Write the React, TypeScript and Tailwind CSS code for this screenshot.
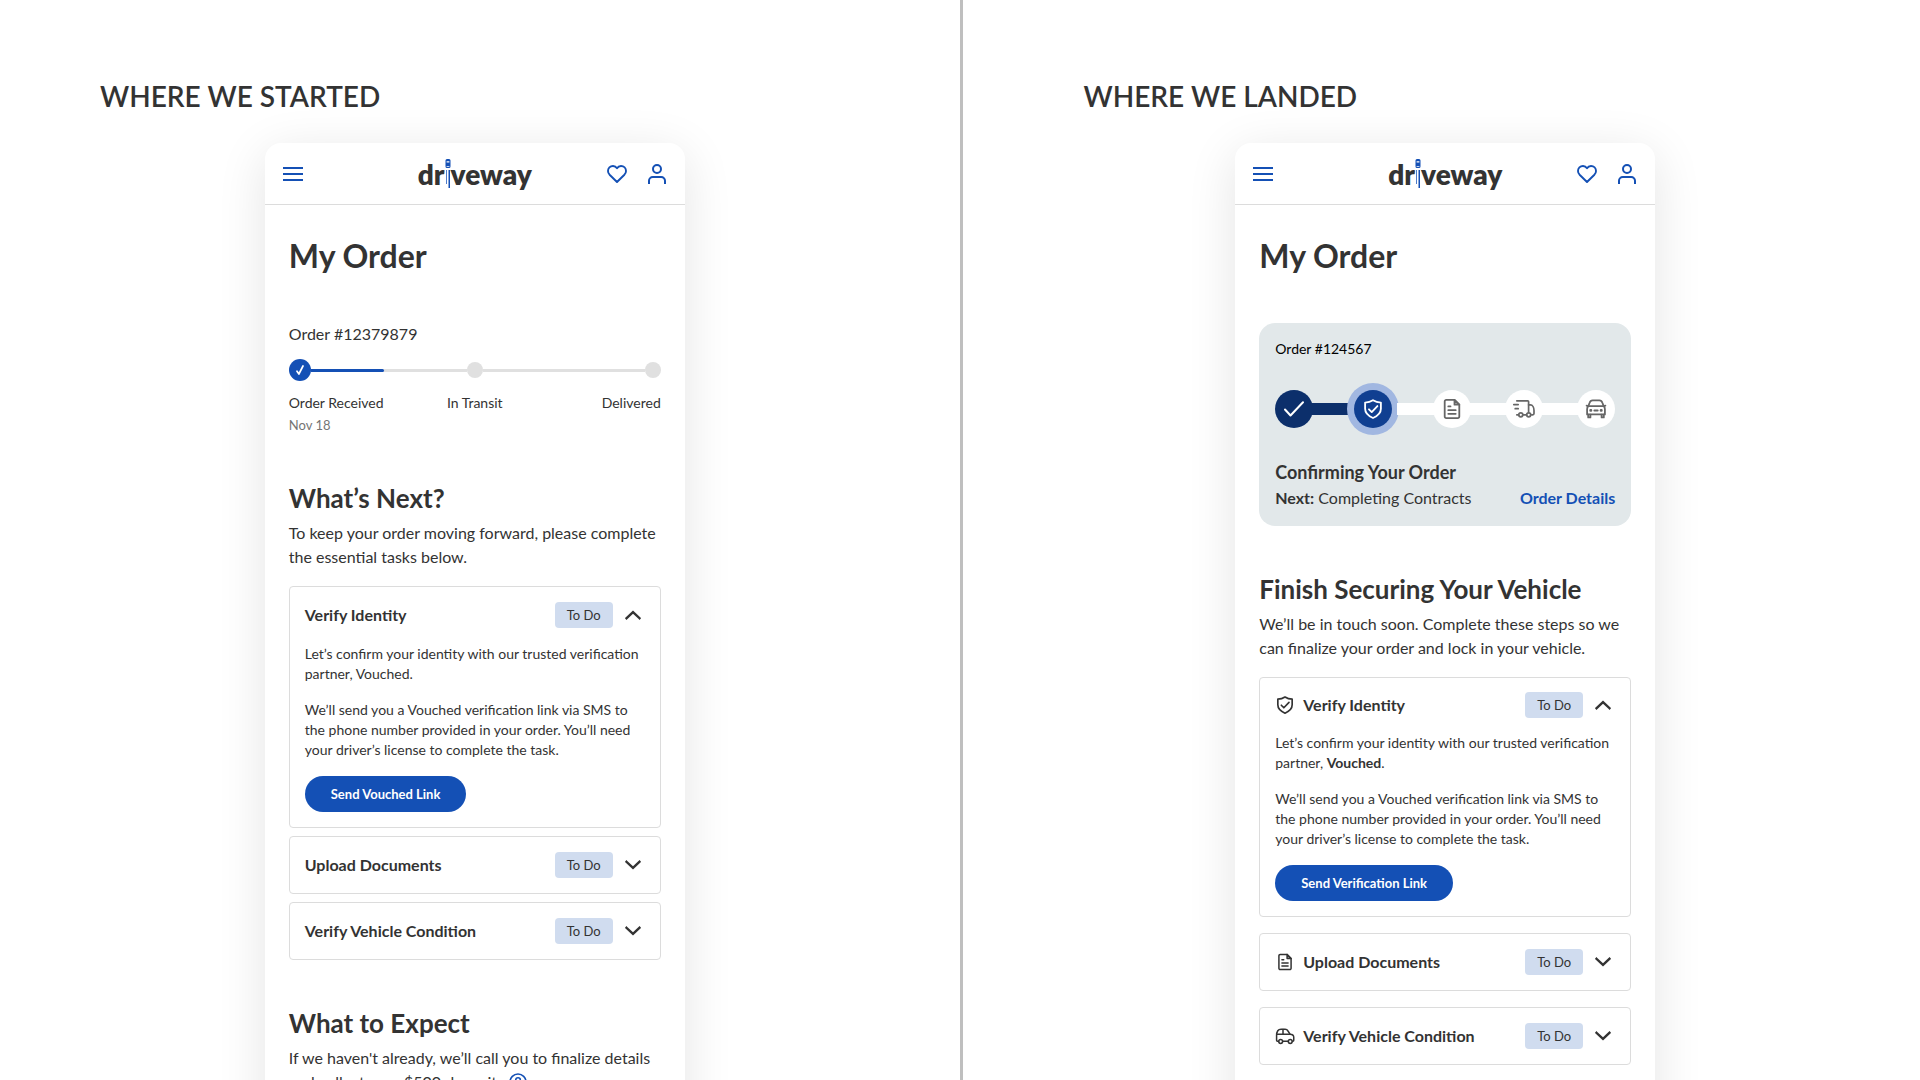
import * as React from "react";
import { clsx } from "clsx";

type IconProps = { className?: string };

function ShieldIcon({ className }: IconProps) {
  return (
    <svg viewBox="0 0 24 24" fill="none" stroke="currentColor" strokeWidth="2" strokeLinejoin="round" className={className} aria-hidden="true">
      <path d="M12 2.400c2.600 1.700 5.400 2.500 8.600 2.600v6.800c0 4.600-3.600 7.900-8.600 10-5-2.100-8.600-5.400-8.600-10V5C6.600 4.900 9.400 4.100 12 2.400Z" />
      <path d="m7.600 12.300 3 3L16.800 8.800" strokeLinecap="round" />
    </svg>
  );
}

function DocIcon({ className }: IconProps) {
  return (
    <svg viewBox="0 0 24 24" fill="none" stroke="currentColor" strokeWidth="1.8" strokeLinecap="round" strokeLinejoin="round" className={className} aria-hidden="true">
      <path d="M14.500 2.900H6.200A1.500 1.500 0 0 0 4.700 4.400v15.200a1.500 1.500 0 0 0 1.500 1.500h11.600a1.500 1.500 0 0 0 1.500-1.500V7.700Z" />
      <path d="M14.500 2.900v4.800h4.800Z" fill="currentColor" fillOpacity=".35" />
      <path d="M8.300 9.400h2.200M8.300 13.200h7.400M8.300 16.800h7.400" />
    </svg>
  );
}

function TruckIcon({ className }: IconProps) {
  return (
    <svg viewBox="0 0 24 24" fill="none" stroke="currentColor" strokeWidth="1.700" strokeLinecap="round" strokeLinejoin="round" className={className} aria-hidden="true">
      <path d="M4.800 3.800H15.700a.9.900 0 0 1 .9.900v10.800" />
      <path d="M16.600 7.800h1.800c2.200 0 3.600 2.900 3.600 5.700v3a1.300 1.300 0 0 1-1.300 1.300h-1" />
      <path d="M1.800 7.600h4.400M3.200 11.700h3M11 17.800h3.500M4.800 17.800h1.600" />
      <circle cx="8.800" cy="17.800" r="2" />
      <circle cx="16.700" cy="17.800" r="2" />
    </svg>
  );
}

function CarFrontIcon({ className }: IconProps) {
  return (
    <svg viewBox="0 0 24 24" fill="none" stroke="currentColor" strokeWidth="1.800" strokeLinecap="round" strokeLinejoin="round" className={className} aria-hidden="true">
      <path d="m4.300 9.200 1.300-3.500C6.200 3.900 7.200 3.400 8.600 3.400h6.800c1.400 0 2.400.5 3 2.300l1.300 3.500" />
      <path d="M2.600 8.600 4.300 9.200h15.400l1.700-.6" />
      <path d="M4.300 9.200c-.9.800-1.200 1.800-1.200 3v5.200h17.800v-5.200c0-1.200-.3-2.200-1.200-3" />
      <path d="M4.200 17.600v2.800h2.200v-2.800M17.600 17.600v2.800h2.200v-2.800" />
      <path d="M6.600 13.400h.4M17 13.400h.4" strokeWidth="2.600" />
      <path d="M10.400 13.400h3.200" strokeWidth="2" />
    </svg>
  );
}

function CarSideIcon({ className }: IconProps) {
  return (
    <svg viewBox="0 0 24 24" fill="none" stroke="currentColor" strokeWidth="1.800" strokeLinecap="round" strokeLinejoin="round" className={className} aria-hidden="true">
      <path d="M4.300 18.200H2.900a1 1 0 0 1-1-1v-5.500C1.900 6.800 3.600 4 7.200 4h5c1.700 0 2.600.7 3.400 2l2.600 4c2.800.2 4.300 1.300 4.300 3.600v3.600a1 1 0 0 1-1 1h-.4M9.400 18.200h6.300" />
      <path d="M2.200 10h16M9.600 4.200V10" />
      <circle cx="6.800" cy="18.600" r="2.300" />
      <circle cx="18.300" cy="18.600" r="2.300" />
    </svg>
  );
}

function Chevron({ open }: { open: boolean }) {
  return (
    <svg viewBox="0 0 16 10" fill="none" stroke="currentColor" strokeWidth="2.400" strokeLinecap="square" className={clsx("h-2.5 w-4", open && "rotate-180")} aria-hidden="true">
      <path d="m1.500 1.800 6.500 6 6.500-6" />
    </svg>
  );
}

function Logo() {
  return (
    <a href="#" aria-label="driveway" className="flex items-center text-[28px] leading-8 font-extrabold text-[#333]">
      <span>dr</span>
      <svg viewBox="0 0 6 30" className="h-[30px] w-1.5 text-[#1450b5]" fill="currentColor" aria-hidden="true">
        <path fillRule="evenodd" d="M2 0h2a1.500 1.500 0 0 1 1.500 1.500v6A1.500 1.500 0 0 1 4 9H2A1.500 1.500 0 0 1 .500 7.500v-6A1.500 1.500 0 0 1 2 0ZM1.600 2.200v1.400h2.800V2.200ZM1.600 7v.8h2.800V7Z" />
        <rect x="1" y="11" width="1" height="14" opacity=".75" />
        <rect x="3.500" y="11" width="1.500" height="18" />
      </svg>
      <span>veway</span>
    </a>
  );
}

function PhoneHeader() {
  return (
    <header className="flex h-[62px] items-center justify-between border-b border-[#dcdcdc] px-[18px] text-[#1450b5]">
      <button type="button" aria-label="Menu" className="flex w-[60px]">
        <svg viewBox="0 0 20 14" className="h-3.5 w-5" fill="currentColor" aria-hidden="true">
          <path d="M0 0h20v2H0zM0 6h20v2H0zM0 12h20v2H0z" />
        </svg>
      </button>
      <Logo />
      <div className="flex items-center gap-5">
        <button type="button" aria-label="Favorites">
          <svg viewBox="0 0 20 18" className="h-[18px] w-5" fill="none" stroke="currentColor" strokeWidth="1.900" strokeLinejoin="round" aria-hidden="true">
            <path d="M10 3.300C11 1.700 12.500 1 14 1c2.900 0 5 2.200 5 4.900 0 1.500-.6 2.700-1.600 3.800L10 17 2.600 9.700C1.600 8.600 1 7.400 1 5.900 1 3.200 3.100 1 6 1c1.500 0 3 .7 4 2.300Z" />
          </svg>
        </button>
        <button type="button" aria-label="Account">
          <svg viewBox="0 0 20 20" className="size-5" fill="none" stroke="currentColor" strokeWidth="2" aria-hidden="true">
            <circle cx="10" cy="5" r="4" />
            <path d="M2 20v-3.200A3.800 3.800 0 0 1 5.800 13h8.400a3.800 3.800 0 0 1 3.800 3.800V20" />
          </svg>
        </button>
      </div>
    </header>
  );
}

type TaskCardProps = {
  title: string;
  icon?: React.ReactNode;
  defaultOpen?: boolean;
  children?: React.ReactNode;
};

function TaskCard({ title, icon, defaultOpen = false, children }: TaskCardProps) {
  const [open, setOpen] = React.useState(defaultOpen);
  const compact = open && Boolean(icon);

  return (
    <section className="rounded border border-[#dcdcdc] p-[15px]">
      <h3>
        <button
          type="button"
          aria-expanded={open}
          onClick={() => setOpen(!open)}
          className={clsx("flex w-full items-center gap-3 pr-1", compact ? "h-6" : "h-[26px]")}
        >
          <span className="flex flex-1 items-center gap-2 text-left text-base font-bold">
            {icon}
            {title}
          </span>
          <span className="rounded bg-[#d0dcef] px-3 text-[13px] leading-[26px]">To Do</span>
          <Chevron open={open} />
        </button>
      </h3>
      {open && children}
    </section>
  );
}

function VerifyBody({ partner, action }: { partner: React.ReactNode; action: string }) {
  return (
    <div className="mt-4 flex flex-col items-start gap-4 text-sm leading-5">
      <p>
        Let’s confirm your identity with our trusted verification
        <br />
        partner, {partner}.
      </p>
      <p>
        We’ll send you a Vouched verification link via SMS to
        <br />
        the phone number provided in your order. You’ll need
        <br />
        your driver’s license to complete the task.
      </p>
      <button type="button" className="h-9 rounded-full bg-[#1450b5] px-[26px] text-[13px] font-bold text-white">
        {action}
      </button>
    </div>
  );
}

function SimpleTracker() {
  return (
    <div>
      <p className="text-base leading-[22px]">Order #12379879</p>
      <div className="mt-3.5 flex h-[22px] items-center">
        <span className="flex size-[22px] items-center justify-center rounded-full bg-[#1450b5]">
          <svg viewBox="0 0 8 10" className="h-2.5 w-2" fill="none" stroke="#fff" strokeWidth="1.700" strokeLinecap="round" strokeLinejoin="round" aria-hidden="true">
            <path d="M1 6.200 2.900 9 7 1" />
          </svg>
        </span>
        <span className="flex h-[3px] flex-[26] bg-[#e0e0e0]">
          <span className="w-[47%] rounded-r-full bg-[#1450b5]" />
        </span>
        <span className="size-4 rounded-full bg-[#e0e0e0]" />
        <span className="h-[3px] flex-[27] bg-[#e0e0e0]" />
        <span className="size-4 rounded-full bg-[#e0e0e0]" />
      </div>
      <div className="mt-3 grid grid-cols-3 text-sm leading-5">
        <span>Order Received</span>
        <span className="text-center">In Transit</span>
        <span className="text-right">Delivered</span>
      </div>
      <p className="mt-0.5 text-[13px] leading-5 text-[#757575]">Nov 18</p>
    </div>
  );
}

function Step({ children, className }: { children: React.ReactNode; className?: string }) {
  return (
    <span className={clsx("flex size-[38px] shrink-0 items-center justify-center rounded-full", className)}>
      {children}
    </span>
  );
}

function OrderTracker() {
  return (
    <div className="rounded-2xl bg-[#e2e8ea] p-4">
      <p className="text-sm leading-5 text-black">Order #124567</p>
      <div className="mt-6 flex items-center text-[#666]">
        <Step className="bg-[#0c2f6b] text-white">
          <svg viewBox="0 0 20 16" className="h-4 w-5" fill="none" stroke="currentColor" strokeWidth="2" strokeLinecap="round" strokeLinejoin="round" aria-hidden="true">
            <path d="m1 8.500 5.500 6L19 1.200" />
          </svg>
        </Step>
        <span className="-mx-0.5 h-3 flex-1 bg-[#0c2f6b]" />
        <span className="rounded-full bg-[#a1b7e1] p-[7px]">
          <Step className="bg-[#103f91] text-white">
            <ShieldIcon className="size-[22px]" />
          </Step>
        </span>
        <span className="-mx-0.5 h-3 flex-1 bg-white" />
        <Step className="bg-white">
          <DocIcon className="size-6" />
        </Step>
        <span className="-mx-0.5 h-3 flex-1 bg-white" />
        <Step className="bg-white">
          <TruckIcon className="size-6" />
        </Step>
        <span className="-mx-0.5 h-3 flex-1 bg-white" />
        <Step className="bg-white">
          <CarFrontIcon className="size-6" />
        </Step>
      </div>
      <h2 className="mt-6 text-lg leading-[27px] font-bold">Confirming Your Order</h2>
      <div className="flex items-center justify-between text-base leading-6">
        <p>
          <strong className="font-bold">Next:</strong> Completing Contracts
        </p>
        <a href="#" className="font-bold text-[#1450b5]">
          Order Details
        </a>
      </div>
    </div>
  );
}

function SectionIntro({ title, children }: { title: string; children: React.ReactNode }) {
  return (
    <div className="mt-[47px] flex flex-col gap-[7px]">
      <h2 className="text-[26px] leading-8 font-bold">{title}</h2>
      <p className="text-base leading-6">{children}</p>
    </div>
  );
}

function Phone({ children }: { children: React.ReactNode }) {
  return (
    <article className="mx-auto w-full max-w-[420px] flex-1 shrink-0 rounded-t-2xl bg-white shadow-[0_10px_50px_rgba(0,0,0,0.11)]">
      <PhoneHeader />
      <div className="px-6 pt-[31px] pb-24">
        <h1 className="text-[32px] leading-10 font-bold">My Order</h1>
        {children}
      </div>
    </article>
  );
}

export default function App() {
  return (
    <main className="flex h-screen overflow-hidden bg-white font-['Lato',sans-serif] text-[#333]">
      <section className="flex flex-1 flex-col pr-2.5">
        <p className="pt-20 pb-[31px] pl-[100px] text-[28px] leading-8 font-semibold">WHERE WE STARTED</p>
        <Phone>
          <div className="mt-[47px]">
            <SimpleTracker />
          </div>
          <SectionIntro title="What’s Next?">
            To keep your order moving forward, please complete
            <br />
            the essential tasks below.
          </SectionIntro>
          <div className="mt-[17px] flex flex-col gap-2">
            <TaskCard title="Verify Identity" defaultOpen>
              <VerifyBody partner="Vouched" action="Send Vouched Link" />
            </TaskCard>
            <TaskCard title="Upload Documents" />
            <TaskCard title="Verify Vehicle Condition" />
          </div>
          <SectionIntro title="What to Expect">
            If we haven't already, we’ll call you to finalize details
            <br />
            and collect your $500 deposit.
            <button type="button" aria-label="More about the deposit" className="ml-2 align-text-bottom text-[#1450b5]">
              <svg viewBox="0 0 18 18" className="size-[18px]" fill="none" stroke="currentColor" strokeWidth="1.600" strokeLinecap="round" aria-hidden="true">
                <circle cx="9" cy="9" r="8" />
                <path d="M6.700 7c.1-1.400 1-2.200 2.300-2.200s2.300.8 2.300 2c0 1.600-2.300 1.700-2.300 3.400M9 12.900v.1" />
              </svg>
            </button>
          </SectionIntro>
        </Phone>
      </section>

      <div className="w-[3px] bg-[#bfbfbf]" />

      <section className="flex flex-1 flex-col pl-2">
        <p className="pt-20 pb-[31px] pl-[113px] text-[28px] leading-8 font-semibold">WHERE WE LANDED</p>
        <Phone>
          <div className="mt-[47px]">
            <OrderTracker />
          </div>
          <SectionIntro title="Finish Securing Your Vehicle">
            We’ll be in touch soon. Complete these steps so we
            <br />
            can finalize your order and lock in your vehicle.
          </SectionIntro>
          <div className="mt-[17px] flex flex-col gap-4">
            <TaskCard title="Verify Identity" icon={<ShieldIcon className="size-5" />} defaultOpen>
              <VerifyBody partner={<strong className="font-bold">Vouched</strong>} action="Send Verification Link" />
            </TaskCard>
            <TaskCard title="Upload Documents" icon={<DocIcon className="size-5" />} />
            <TaskCard title="Verify Vehicle Condition" icon={<CarSideIcon className="size-5" />} />
          </div>
        </Phone>
      </section>
    </main>
  );
}
